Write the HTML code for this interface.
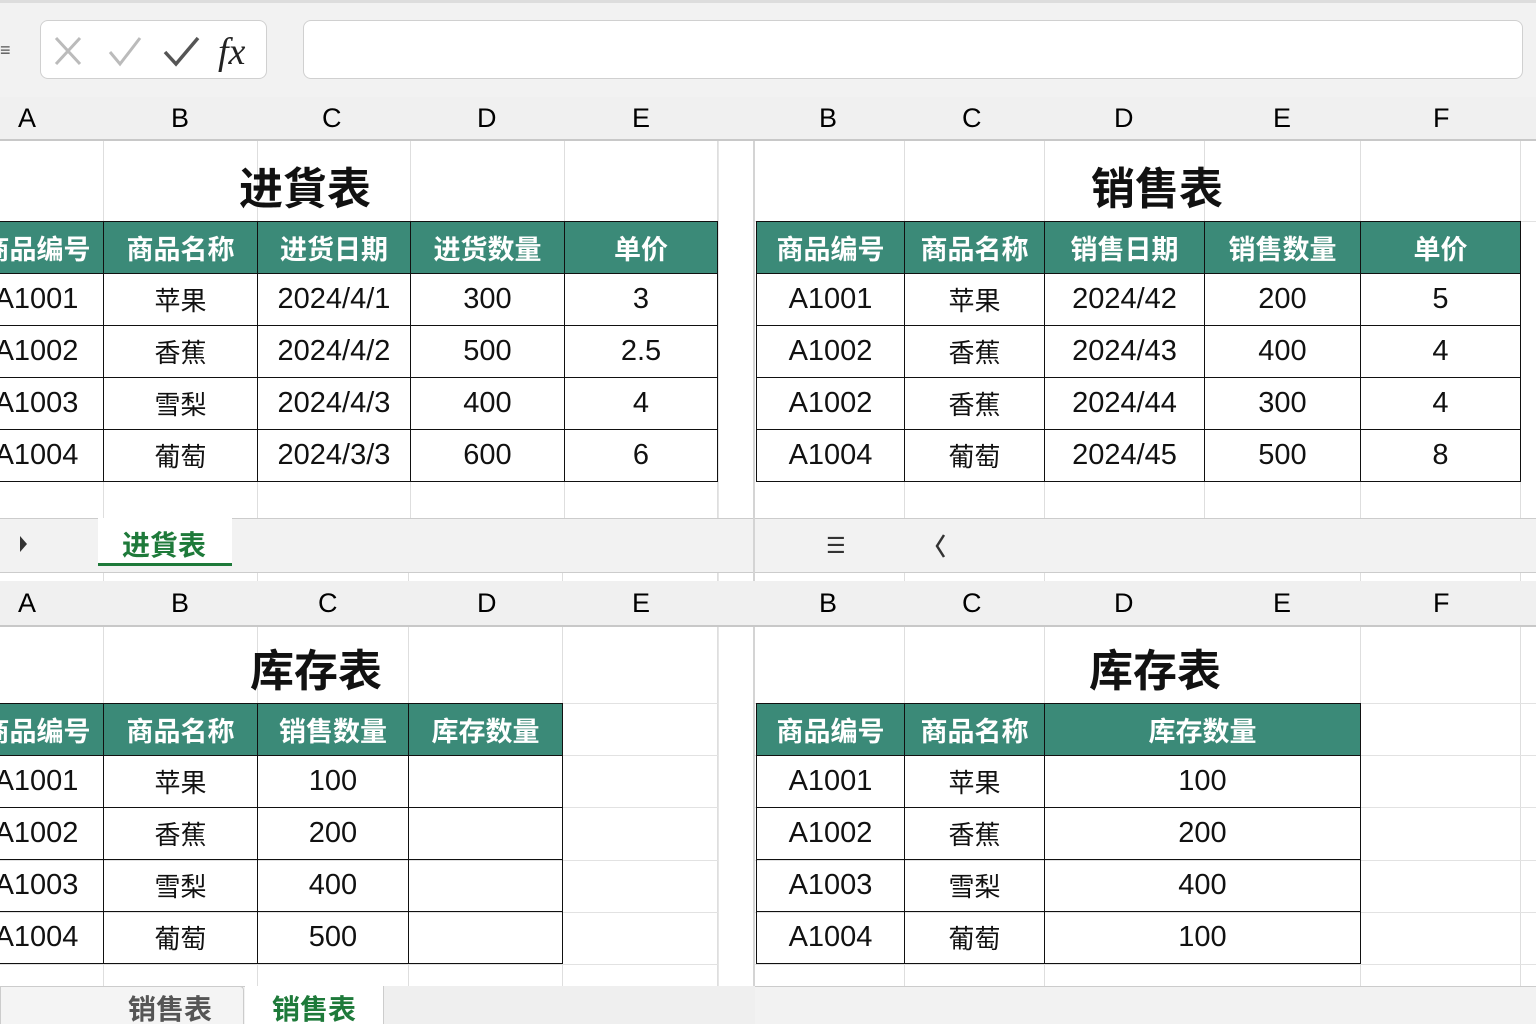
<!DOCTYPE html>
<html><head><meta charset="utf-8"><style>
*{margin:0;padding:0;box-sizing:border-box}
body{width:1536px;height:1024px;overflow:hidden;background:#fff;position:relative;font-family:"Liberation Sans","Noto Sans CJK SC",sans-serif}
.a{position:absolute}
.bar{background:#f2f2f2}
.colh{position:absolute;height:44px;background:#f0f0f0;border-bottom:2px solid #c8c8c8}
.colh span{position:absolute;top:6px;font-size:27px;color:#222;transform:translateX(-50%)}
.vl{position:absolute;width:1px;background:#dedede}
.hl{position:absolute;height:1px;background:#e2e2e2}
table{position:absolute;border-collapse:collapse;table-layout:fixed}
td{border:1.5px solid #111;text-align:center;font-size:29px;color:#111;height:52px;padding:0;white-space:nowrap;overflow:hidden;font-family:"Liberation Sans Narrow","Liberation Sans","Noto Sans CJK SC",sans-serif}
tr.h td{background:#3b8a78;color:#fff;font-weight:bold;font-size:27px;font-family:"Noto Sans CJK SC",sans-serif}
td.c{font-family:"Noto Sans CJK SC",sans-serif;font-size:26px}
.title{position:absolute;font-size:44px;font-weight:bold;font-family:"Noto Sans CJK SC",sans-serif;color:#111;transform:translateX(-50%)}
</style></head><body>
<!-- top bar -->
<div class="a bar" style="left:0;top:0;width:1536px;height:97px;border-top:3px solid #ddd"></div>
<div class="a" style="left:0;top:40px;font-size:18px;color:#555">≡</div>
<div class="a" style="left:40px;top:20px;width:227px;height:59px;background:#fff;border:1.5px solid #d0d0d0;border-radius:8px"></div>
<svg class="a" style="left:50px;top:30px" width="210" height="44">
<path d="M6 8 L30 34 M30 8 L6 34" stroke="#bbb" stroke-width="3" fill="none"/>
<path d="M60 22 L70 34 L90 8" stroke="#bbb" stroke-width="3" fill="none"/>
<path d="M115 22 L126 34 L148 8" stroke="#555" stroke-width="3.5" fill="none"/>
<text x="168" y="34" font-family="Liberation Serif" font-style="italic" font-size="38" fill="#222">fx</text>
</svg>
<div class="a" style="left:303px;top:20px;width:1220px;height:59px;background:#fff;border:1.5px solid #d0d0d0;border-radius:8px"></div>

<!-- gridlines -->
<div class="vl" style="left:103px;top:97px;height:927px"></div>
<div class="vl" style="left:257px;top:97px;height:927px"></div>
<div class="vl" style="left:410px;top:97px;height:421px"></div>
<div class="vl" style="left:408px;top:573px;height:413px"></div>
<div class="vl" style="left:564px;top:97px;height:421px"></div>
<div class="vl" style="left:562px;top:573px;height:413px"></div>
<div class="vl" style="left:717px;top:97px;height:927px"></div>
<div class="vl" style="left:904px;top:97px;height:927px"></div>
<div class="vl" style="left:1044px;top:97px;height:927px"></div>
<div class="vl" style="left:1204px;top:97px;height:421px"></div>
<div class="vl" style="left:1360px;top:97px;height:927px"></div>
<div class="vl" style="left:1520px;top:97px;height:927px"></div>
<div class="hl" style="left:0;top:221px;width:1536px"></div>
<div class="hl" style="left:0;top:703px;width:1536px"></div>
<div class="hl" style="left:0;top:755px;width:1536px"></div>
<div class="hl" style="left:0;top:807px;width:1536px"></div>
<div class="hl" style="left:0;top:860px;width:1536px"></div>
<div class="hl" style="left:0;top:912px;width:1536px"></div>
<div class="hl" style="left:0;top:964px;width:1536px"></div>
<!-- pane split -->
<div class="a" style="left:718px;top:97px;width:37px;height:927px;background:#fff;border-left:1px solid #e6e6e6;border-right:2px solid #d4d4d4"></div>

<!-- column headers top -->
<div class="colh" style="left:0;top:97px;width:1536px"></div>
<div class="a" style="left:0;top:97px;width:1536px;height:44px">
<span class="a" style="left:18px;top:6px;font-size:27px">A</span>
<span class="a" style="left:171px;top:6px;font-size:27px">B</span>
<span class="a" style="left:322px;top:6px;font-size:27px">C</span>
<span class="a" style="left:477px;top:6px;font-size:27px">D</span>
<span class="a" style="left:632px;top:6px;font-size:27px">E</span>
<span class="a" style="left:819px;top:6px;font-size:27px">B</span>
<span class="a" style="left:962px;top:6px;font-size:27px">C</span>
<span class="a" style="left:1114px;top:6px;font-size:27px">D</span>
<span class="a" style="left:1273px;top:6px;font-size:27px">E</span>
<span class="a" style="left:1433px;top:6px;font-size:27px">F</span>
</div>

<div class="title" style="left:305px;top:153px">进貨表</div>
<div class="title" style="left:1157px;top:153px">销售表</div>

<table style="left:-31px;top:221px;width:748px">
<colgroup><col style="width:134px"><col style="width:154px"><col style="width:153px"><col style="width:154px"><col style="width:153px"></colgroup>
<tr class="h"><td>商品编号</td><td>商品名称</td><td>进货日期</td><td>进货数量</td><td>单价</td></tr>
<tr><td>A1001</td><td class="c">苹果</td><td>2024/4/1</td><td>300</td><td>3</td></tr>
<tr><td>A1002</td><td class="c">香蕉</td><td>2024/4/2</td><td>500</td><td>2.5</td></tr>
<tr><td>A1003</td><td class="c">雪梨</td><td>2024/4/3</td><td>400</td><td>4</td></tr>
<tr><td>A1004</td><td class="c">葡萄</td><td>2024/3/3</td><td>600</td><td>6</td></tr>
</table>

<table style="left:756px;top:221px;width:764px">
<colgroup><col style="width:148px"><col style="width:140px"><col style="width:160px"><col style="width:156px"><col style="width:160px"></colgroup>
<tr class="h"><td>商品编号</td><td>商品名称</td><td>销售日期</td><td>销售数量</td><td>单价</td></tr>
<tr><td>A1001</td><td class="c">苹果</td><td>2024/42</td><td>200</td><td>5</td></tr>
<tr><td>A1002</td><td class="c">香蕉</td><td>2024/43</td><td>400</td><td>4</td></tr>
<tr><td>A1002</td><td class="c">香蕉</td><td>2024/44</td><td>300</td><td>4</td></tr>
<tr><td>A1004</td><td class="c">葡萄</td><td>2024/45</td><td>500</td><td>8</td></tr>
</table>

<!-- middle tab bar -->
<div class="a bar" style="left:0;top:518px;width:1536px;height:55px;border-top:1.5px solid #ccc;border-bottom:1.5px solid #ccc"></div>
<div class="a" style="left:718px;top:518px;width:37px;height:55px;border-right:2px solid #d4d4d4"></div>
<svg class="a" style="left:18px;top:534px" width="12" height="20"><path d="M2 2 L9 10 L2 18Z" fill="#333"/></svg>
<div class="a" style="left:98px;top:518px;width:134px;height:48px;background:#fff;border-bottom:3px solid #1e7a3a"></div>
<div class="a" style="left:122px;top:524px;font-size:28px;font-weight:bold;color:#1e7a3a;font-family:'Noto Sans CJK SC',sans-serif">进貨表</div>
<div class="a" style="left:826px;top:533px;font-size:22px;color:#333">☰</div>
<svg class="a" style="left:933px;top:533px" width="14" height="26"><path d="M11 2 L4 13 L11 24" stroke="#333" stroke-width="2.5" fill="none"/></svg>

<!-- column headers bottom -->
<div class="colh" style="left:0;top:581px;width:1536px;height:46px"></div>
<div class="a" style="left:0;top:582px;width:1536px;height:44px">
<span class="a" style="left:18px;top:6px;font-size:27px">A</span>
<span class="a" style="left:171px;top:6px;font-size:27px">B</span>
<span class="a" style="left:318px;top:6px;font-size:27px">C</span>
<span class="a" style="left:477px;top:6px;font-size:27px">D</span>
<span class="a" style="left:632px;top:6px;font-size:27px">E</span>
<span class="a" style="left:819px;top:6px;font-size:27px">B</span>
<span class="a" style="left:962px;top:6px;font-size:27px">C</span>
<span class="a" style="left:1114px;top:6px;font-size:27px">D</span>
<span class="a" style="left:1273px;top:6px;font-size:27px">E</span>
<span class="a" style="left:1433px;top:6px;font-size:27px">F</span>
</div>

<div class="title" style="left:316px;top:635px">库存表</div>
<div class="title" style="left:1155px;top:635px">库存表</div>

<table style="left:-31px;top:703px;width:593px">
<colgroup><col style="width:134px"><col style="width:154px"><col style="width:151px"><col style="width:154px"></colgroup>
<tr class="h"><td>商品编号</td><td>商品名称</td><td>销售数量</td><td>库存数量</td></tr>
<tr><td>A1001</td><td class="c">苹果</td><td>100</td><td></td></tr>
<tr><td>A1002</td><td class="c">香蕉</td><td>200</td><td></td></tr>
<tr><td>A1003</td><td class="c">雪梨</td><td>400</td><td></td></tr>
<tr><td>A1004</td><td class="c">葡萄</td><td>500</td><td></td></tr>
</table>

<table style="left:756px;top:703px;width:604px">
<colgroup><col style="width:148px"><col style="width:140px"><col style="width:316px"></colgroup>
<tr class="h"><td>商品编号</td><td>商品名称</td><td>库存数量</td></tr>
<tr><td>A1001</td><td class="c">苹果</td><td>100</td></tr>
<tr><td>A1002</td><td class="c">香蕉</td><td>200</td></tr>
<tr><td>A1003</td><td class="c">雪梨</td><td>400</td></tr>
<tr><td>A1004</td><td class="c">葡萄</td><td>100</td></tr>
</table>

<!-- bottom tab bar -->
<div class="a bar" style="left:0;top:986px;width:1536px;height:38px;border-top:1.5px solid #ccc"></div>
<div class="a" style="left:0;top:986px;width:244px;height:38px;background:#f4f4f4;border:1.5px solid #ccc;border-bottom:none;border-radius:0 4px 0 0"></div>
<div class="a" style="left:128px;top:988px;font-size:28px;font-weight:bold;color:#555;font-family:'Noto Sans CJK SC',sans-serif">销售表</div>
<div class="a" style="left:245px;top:986px;width:138px;height:38px;background:#fff"></div>
<div class="a" style="left:272px;top:988px;font-size:28px;font-weight:bold;color:#1e7a3a;font-family:'Noto Sans CJK SC',sans-serif">销售表</div>
<div class="a" style="left:383px;top:986px;width:372px;height:38px;background:#efefef;border-left:1.5px solid #ccc"></div>
</body></html>
